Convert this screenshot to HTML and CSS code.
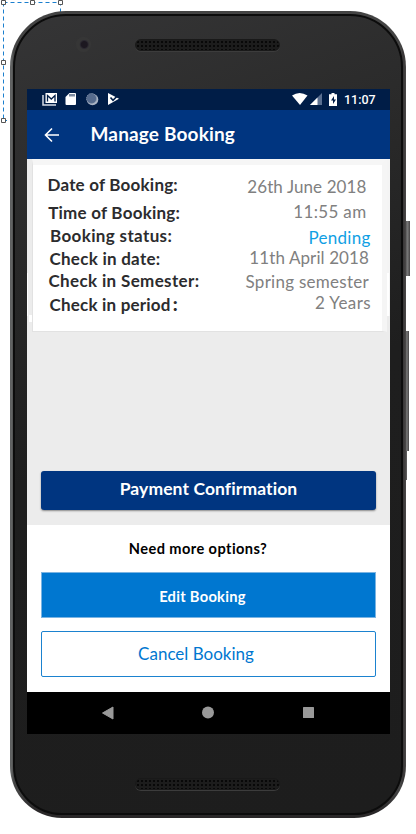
FILE: index.html
```html
<!DOCTYPE html>
<html lang="en">
<head>
<meta charset="utf-8">
<title>Manage Booking</title>
<link rel="stylesheet" href="styles.css">
</head>
<body>
<main class="stage">
  <svg class="selection" width="66" height="126" viewBox="0 0 66 126" fill="none">
    <path d="M3.500 2.500H60.500V12M3.500 2.500V120.500H7" stroke="#1b7fce" stroke-dasharray="4 3"/>
    <g fill="#fff" stroke="#555"><path d="M1.500 .5h4v4h-4zM30.500 .5h4v4h-4zM58.500 .5h4v4h-4zM1.500 60.500h4v4h-4zM1.500 118.500h4v4h-4z"/></g>
  </svg>
  <i class="key power"></i><i class="key volume"></i><i class="key edge"></i>
  <div class="phone">
    <div class="body">
      <div class="bezel top">
        <i class="camera"></i>
        <i class="grille"></i>
      </div>
      <div class="screen">
        <header class="status">
          <svg width="82" height="14" viewBox="0 0 82 14">
            <path d="M1 3v10h13" fill="none" stroke="#d6dce6" stroke-width="1.500"/>
            <path d="M3.500 1H15v10H3.500z" fill="#fff"/>
            <path d="M5.500 9.500V3.500L9.300 7 13 3.500V9.500" fill="none" stroke="#001d47" stroke-width="1.300"/>
            <path d="M27.500 1H33q1 0 1 1v10q0 1-1 1h-8.500q-1 0-1-1V5z" fill="#fff"/>
            <path d="M28 2v2.500M30 2v2.500M32 2v2.500" stroke="#001d47"/>
            <circle cx="50.500" cy="7.500" r="5.800" fill="#a9b4c4"/>
            <circle cx="49.500" cy="6.500" r="5" fill="#566b8d" stroke="#8997ad" stroke-dasharray="1 1"/>
            <path d="M66 1l11 5.800L66 13z" fill="#fff"/>
            <path d="M68.500 5.500l2.500 2.800 6-6" fill="none" stroke="#001d47" stroke-width="1.600"/>
          </svg>
          <svg class="signals" width="48" height="15" viewBox="0 0 48 15">
            <path d="M0 3.500Q7.500-1.500 15.500 3.500L8 13z" fill="#fff"/>
            <path d="M30 1v12H18z" fill="#5a6f90"/>
            <path d="M25.500 5.500V13H18z" fill="#fff"/>
            <path d="M39.500 1h3v1.200H45V14h-8V2.200h2.500z" fill="#fff"/>
            <path d="M42 4L39 8.500h2V12l3-4.500h-2z" fill="#001d47"/>
          </svg>
          <time class="clock">11:07</time>
        </header>
        <div class="appbar">
          <svg width="16" height="16" viewBox="0 0 16 16" fill="none" stroke="#fff" stroke-width="1.600"><path d="M15 8H1.500M8 1.500L1.500 8 8 14.500"/></svg>
          <h1>Manage Booking</h1>
        </div>
        <section class="details">
          <div class="card">
            <ul class="labels">
              <li class="l1">Date of Booking:</li>
              <li class="l2">Time of Booking:</li>
              <li class="l3">Booking status:</li>
              <li class="l4">Check in date:</li>
              <li class="l5">Check in Semester:</li>
              <li class="l6">Check in period<b class="colon">:</b></li>
            </ul>
            <ul class="values">
              <li class="v1">26th June 2018</li>
              <li class="v2">11:55 am</li>
              <li class="v3">Pending</li>
              <li class="v4">11th April 2018</li>
              <li class="v5">Spring semester</li>
              <li class="v6">2 Years</li>
            </ul>
          </div>
          <button class="payment">Payment Confirmation</button>
        </section>
        <section class="options">
          <h2>Need more options?</h2>
          <button class="edit">Edit Booking</button>
          <button class="cancel">Cancel Booking</button>
        </section>
        <nav class="nav">
          <svg width="363" height="42" viewBox="0 0 363 42" fill="#999"><path d="M75.500 21L86 15v12z" stroke="#999" stroke-linejoin="round"/><circle cx="181" cy="20.500" r="6"/><rect x="276" y="15" width="11" height="11" rx=".5"/></svg>
        </nav>
      </div>
      <div class="bezel bottom"><i class="grille"></i></div>
    </div>
  </div>
</main>
</body>
</html>
```
FILE: styles.css
```css
* { box-sizing: border-box; margin: 0; padding: 0; }
body { background: #fff; font-family: Lato, "Liberation Sans", sans-serif; width: 416px; height: 834px; overflow: hidden; }
ul { list-style: none; }
svg { display: block; flex: none; }
.stage { position: relative; height: 834px; padding: 11px 0 0 10px; }
.selection { position: absolute; left: 0; top: 0; }
.key { position: absolute; background: linear-gradient(90deg, #3a3839, #777 60%, #464445); }
.power { left: 404px; top: 221px; width: 6px; height: 55px; }
.volume { left: 404px; top: 331px; width: 5px; height: 120px; }
.edge { left: 404px; top: 451px; width: 3px; height: 29px; }
.phone { position: relative; width: 396px; height: 807px; border-radius: 56px 56px 52px 52px; padding: 3px; background: linear-gradient(180deg, transparent 780px, #2a2829 800px), linear-gradient(90deg, #555657 0, #686a6a 1px, #444 4px, #444 391px, #373536 393px, #4a4848 396px); }
.body { height: 801px; border-radius: 53px 53px 49px 49px; border: 2px solid #0c0c0c; background: linear-gradient(160deg, #353536 0, #2b2b2b 22%, #1e1e1e 50%, #1d1d1d 100%); padding-left: 12px; }
.bezel { display: flex; }
.top { height: 73px; padding-top: 23px; }
.camera { width: 15px; height: 15px; margin: -2px 0 0 49px; border-radius: 50%; background: radial-gradient(circle at 55% 50%, #1c1820 0 3px, #2a2830 4px, #363636 5px 7px); }
.grille { width: 145px; height: 12px; border-radius: 6px; background: radial-gradient(circle at 2px 2px, #080808 1px, #1c1c1c 1.500px) 0 0 / 4px 4px; border: 1px solid #191919; box-shadow: 0 1px #3c3c3c; }
.top .grille { margin-left: 44px; }
.bottom { padding: 44px 0 0 108px; }
.screen { width: 363px; height: 645px; background: #fff; }
.status { height: 21px; background: #001d47; display: flex; padding: 3px 0 0 15px; }
.signals { margin-left: 168px; }
.clock { margin-left: 4px; font: 500 12.500px/16px Roboto, sans-serif; color: #fff; letter-spacing: 0; }
.appbar { height: 49px; background: #003580; display: flex; padding: 17px 0 0 17px; }
.appbar h1 { margin: -5px 0 0 30.500px; font: bold 19px/24px Lato, sans-serif; letter-spacing: .16px; color: #fff; white-space: nowrap; }
.details { height: 366px; display: flex; flex-direction: column;
  background:
    linear-gradient(#fff, #fff) 0 114px / 1px 43px no-repeat,
    linear-gradient(#fff, #fff) 2px 156px / 5px 7px no-repeat,
    linear-gradient(#fff, #fff) 358px 114px / 4px 43px no-repeat,
    linear-gradient(#f4f4f4, #f4f4f4) 360px 0 / 3px 157px no-repeat,
    #ececec; }
.card { height: 173px; flex: none; margin: 0 3px 0 5px; background: #fff; border: 1px solid #e2e2e2; border-top: 6px solid #f6f6f6; border-right: 5px solid #f5f5f5; display: flex; justify-content: space-between; }
.card li { line-height: 23px; white-space: nowrap; }
.labels { font-weight: bold; font-size: 17px; color: #2c2c2e; padding: 8px 0 0 15px; }
.l1 { height: 28px; margin-left: -.5px; letter-spacing: .21px; }
.l2 { height: 23px; margin-left: .2px; letter-spacing: .23px; }
.l3 { height: 23px; margin-left: 2px; letter-spacing: .36px; }
.l4 { height: 22px; margin-left: 1.500px; letter-spacing: .26px; }
.l5 { height: 24px; margin-left: .5px; letter-spacing: .35px; }
.l6 { height: 23px; margin-left: 1.500px; letter-spacing: .2px; }
.colon { margin-left: 2px; font-size: 19px; line-height: 1; }
.values { font-size: 17px; color: #808080; padding: 10px 14px 0 0; text-align: right; }
.v1 { height: 25px; margin-right: 1.500px; letter-spacing: .1px; }
.v2 { height: 26px; margin-right: 1.500px; letter-spacing: .35px; }
.values .v3 { height: 20px; margin-right: -2.500px; letter-spacing: .25px; color: #109fe4; }
.v4 { height: 24px; margin-right: -1px; letter-spacing: .1px; }
.v5 { height: 21px; margin-right: -1px; letter-spacing: .27px; }
.v6 { height: 23px; margin-right: -3px; letter-spacing: .4px; }
.payment { flex: none; margin: auto 14px 15px; height: 39px; border: 0; padding-bottom: 3px; border-radius: 3px; background: #003580; color: #fff; box-shadow: 0 1px 2px #888; font: bold 17.500px/34px Lato, sans-serif; letter-spacing: .1px; }
.options { height: 167px; padding: 14px 14px 0; display: flex; flex-direction: column; }
.options h2 { height: 33px; padding-right: 21px; text-align: center; font: bold 14.600px/20px Lato, sans-serif; letter-spacing: .42px; color: #000; }
.options button { font-family: Lato, sans-serif; }
.edit { height: 46px; border: 1px solid #7bb4e2; padding: 2px 12px 0 0; background: #0077d0; color: #fff; font-weight: bold; font-size: 14.700px; letter-spacing: .28px; }
.cancel { height: 46px; margin-top: 13px; border: 1px solid #1b82cf; padding: 0 25px 1px 0; border-radius: 2px; background: #fff; color: #0077d0; font-size: 17px; }
.nav { height: 42px; background: #000; }
```
